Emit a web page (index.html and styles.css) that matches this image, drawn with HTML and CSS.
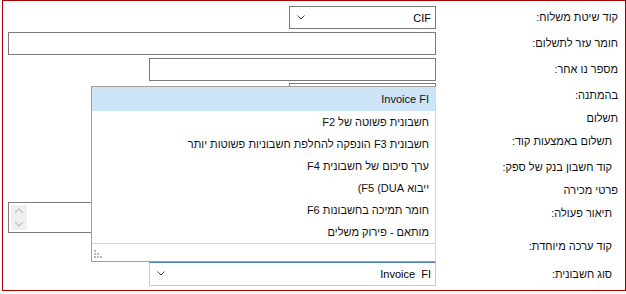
FILE: index.html
```html
<!DOCTYPE html>
<html lang="he" dir="rtl">
<head>
    <meta charset="UTF-8">
    <meta name="viewport" content="width=device-width, initial-scale=1.0">
    <title>פרטי חשבונית</title>
    <link rel="stylesheet" href="styles.css">
</head>
<body>
    <div class="form">
        <div class="row h26">
            <label class="lbl">קוד שיטת משלוח:</label>
            <div class="field">
                <div class="select w147">
                    <span class="value">CIF</span>
                    <svg class="chevron" width="8" height="5" viewBox="0 0 8 5"><path d="M0.5 0.5 L4 4 L7.5 0.5" /></svg>
                </div>
            </div>
        </div>
        <div class="row h26">
            <label class="lbl">חומר עזר לתשלום:</label>
            <div class="field"><input class="input wfull" type="text"></div>
        </div>
        <div class="row h26">
            <label class="lbl">מספר נו אחר:</label>
            <div class="field"><input class="input w287" type="text"></div>
        </div>
        <div class="row h25">
            <label class="lbl">בהמתנה:</label>
            <div class="field"><input class="input w147" type="text"></div>
        </div>
        <div class="row h22">
            <span class="lbl">תשלום</span>
        </div>
        <div class="row h24">
            <label class="lbl sub">תשלום באמצעות קוד:</label>
        </div>
        <div class="row h27">
            <label class="lbl sub">קוד חשבון בנק של ספק:</label>
        </div>
        <div class="row h20">
            <span class="lbl">פרטי מכירה</span>
        </div>
        <div class="row h34 top">
            <label class="lbl sub">תיאור פעולה:</label>
            <div class="field">
                <div class="textarea">
                    <div class="spin">
                        <svg width="10" height="6" viewBox="0 0 10 6"><path d="M1 5 L5 1 L9 5" /></svg>
                        <svg width="10" height="6" viewBox="0 0 10 6"><path d="M1 1 L5 5 L9 1" /></svg>
                    </div>
                </div>
            </div>
        </div>
        <div class="row h24">
            <label class="lbl sub">קוד ערכה מיוחדת:</label>
        </div>
        <div class="row h31">
            <label class="lbl sub">סוג חשבונית:</label>
            <div class="field">
                <div class="select w287 focused">
                    <span class="value">Invoice&nbsp; FI</span>
                    <svg class="chevron" width="8" height="5" viewBox="0 0 8 5"><path d="M0.5 0.5 L4 4 L7.5 0.5" /></svg>
                </div>
            </div>
        </div>

        <div class="dropdown">
            <ul class="options">
                <li class="selected"><span dir="ltr">Invoice FI</span></li>
                <li>חשבונית פשוטה של F2</li>
                <li>חשבונית F3 הונפקה להחלפת חשבוניות פשוטות יותר</li>
                <li>ערך סיכום של חשבונית F4</li>
                <li>ייבוא <bdi dir="ltr">(F5 (DUA</bdi></li>
                <li>חומר תמיכה בחשבונות F6</li>
                <li>מותאם - פירוק משלים</li>
            </ul>
            <div class="dropdown-footer">
                <svg class="grip" width="8" height="8" viewBox="0 0 8 8">
                    <rect x="0" y="0" width="2" height="2" />
                    <rect x="0" y="3" width="2" height="2" />
                    <rect x="3" y="3" width="2" height="2" />
                    <rect x="0" y="6" width="2" height="2" />
                    <rect x="3" y="6" width="2" height="2" />
                    <rect x="6" y="6" width="2" height="2" />
                </svg>
            </div>
        </div>
    </div>
</body>
</html>
```
FILE: styles.css
```css
body {
    margin: 0;
    padding: 0;
    font-family: "Liberation Sans", Arial, sans-serif;
    font-size: 11px;
    color: #000;
    background: #fff;
}

.form {
    position: relative;
    box-sizing: border-box;
    width: 624px;
    border: 1px solid #a80000;
    padding: 3px 7px 1px 5px;
}

.row {
    display: grid;
    grid-template-columns: 182px 1fr;
    align-items: center;
}

.row.top {
    align-items: start;
}

.h20 { height: 20px; }
.h22 { height: 22px; }
.h24 { height: 24px; }
.h25 { height: 25px; }
.h26 { height: 26px; }
.h27 { height: 27px; }
.h31 { height: 31px; }
.h34 { height: 34px; }

.lbl {
    white-space: nowrap;
    line-height: 14px;
    color: #111;
}

.lbl.sub {
    padding-right: 6px;
}

.row.top .lbl {
    padding-top: 6px;
}

.row.top .field {
    padding-top: 2px;
}

.field {
    display: flex;
}

.input, .select, .textarea {
    box-sizing: border-box;
    height: 23px;
    border: 1px solid #7a7a7a;
    background: #fff;
    margin: 0;
    padding: 0;
    font: inherit;
}

.wfull { width: 100%; }
.w287 { width: 287px; }
.w147 { width: 147px; }

.select {
    display: flex;
    align-items: center;
    justify-content: space-between;
    padding: 0 4px 0 7px;
}

.select .value {
    direction: ltr;
    padding-top: 1px;
}

.select.focused {
    height: 24px;
    border-color: #b7cde2;
    border-top-color: #4f86bf;
}

.chevron path, .spin path {
    fill: none;
    stroke: #444;
    stroke-width: 1;
}

.textarea {
    width: 100%;
    height: 31px;
    display: flex;
    justify-content: flex-end;
    padding: 2px;
}

.spin {
    width: 16px;
    background: #f0f0f0;
    display: flex;
    flex-direction: column;
    align-items: center;
    justify-content: space-around;
}

.spin path {
    stroke: #c2c2c2;
    stroke-width: 1.3;
}

.dropdown {
    position: absolute;
    left: 88px;
    top: 85px;
    box-sizing: border-box;
    width: 345px;
    height: 176px;
    border: 1px solid #a0a0a0;
    border-right-color: #d8d8d8;
    background: #fff;
    display: flex;
    flex-direction: column;
}

.options {
    list-style: none;
    margin: 0;
    padding: 0;
    border-bottom: 1px solid #d5d5d5;
}

.options li {
    height: 22px;
    line-height: 22px;
    padding-right: 6px;
    white-space: nowrap;
    color: #111;
}

.options li.selected {
    height: 24px;
    line-height: 24px;
    background: #cce4f7;
}

.dropdown-footer {
    flex: 1;
    display: flex;
    align-items: flex-end;
    justify-content: flex-end;
    padding: 0 0 3px 2px;
}

.grip rect {
    fill: #b8b8b8;
}
```
